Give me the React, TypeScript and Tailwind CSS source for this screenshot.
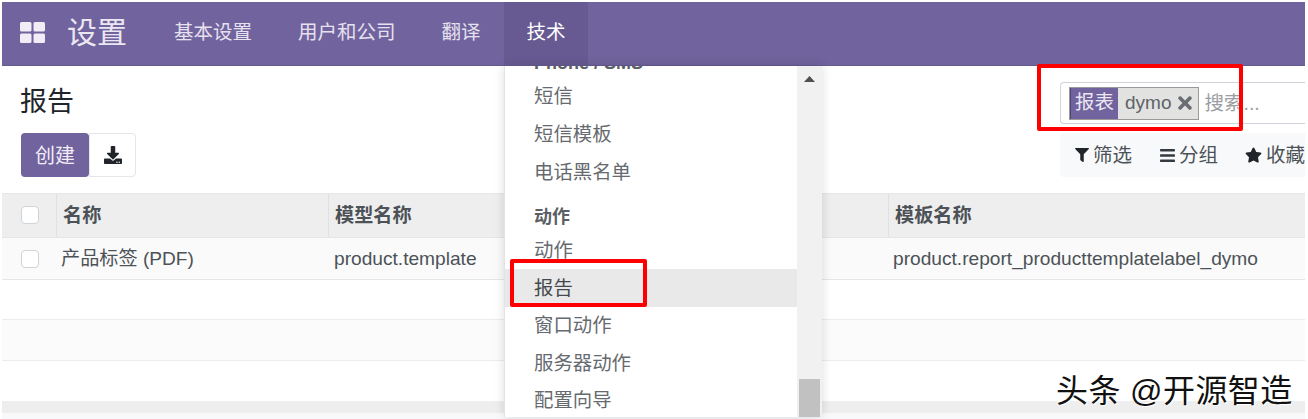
import React from 'react'
import { FaDownload, FaFilter, FaBars, FaStar, FaTimes } from 'react-icons/fa'

const appFont = "font-['Liberation_Sans','Noto_Sans_CJK_SC',sans-serif]"

const topItems = [
  { label: '短信', height: 'h-[38px]' },
  { label: '短信模板', height: 'h-[38px]' },
  { label: '电话黑名单', height: 'h-[37.5px]' },
]

const actionItems = ['动作', '报告', '窗口动作', '服务器动作', '配置向导']

const Checkbox = () => (
  <span className="block w-[18px] h-[18px] rounded-[4px] border border-[#ced4da] bg-white" />
)

const DropdownMenu = () => (
  <div className="absolute left-[504px] top-[66px] w-[318px] h-[351px] bg-white border-l border-[#e4e4e4] shadow-[0_0_10px_rgba(0,0,0,0.14)] flex overflow-hidden">
    <div className="flex-1 min-w-0 text-[19.4px] text-[#666a6e]">
      <div className="h-[12px] relative overflow-hidden">
        <span className="absolute left-[29px] top-[-13px] font-bold text-[18px] leading-[20px] text-[#5c6064] whitespace-nowrap">Phone / SMS</span>
      </div>
      {topItems.map(item => (
        <div key={item.label} className={`${item.height} flex items-center pl-[29px]`}>{item.label}</div>
      ))}
      <div className="h-[9.5px]" />
      <div className="h-[30.5px] pt-[2px] flex items-center pl-[29px] text-[18px] font-bold text-[#5c6064]">动作</div>
      {actionItems.map(label => (
        <div
          key={label}
          className={`h-[37.5px] pt-[1px] flex items-center pl-[29px] ${label === '报告' ? 'bg-[#e9e9e9] text-[#45494d]' : ''}`}
        >
          {label}
        </div>
      ))}
    </div>
    <div className="w-[25px] bg-[#f1f1f1] flex flex-col items-center justify-between shrink-0">
      <svg className="mt-[10px]" width="11" height="6" viewBox="0 0 11 6">
        <path d="M5.5 0 L11 6 L0 6 Z" fill="#505050" />
      </svg>
      <div className="w-[21px] h-[38px] bg-[#c1c1c1]" />
    </div>
  </div>
)

export default function App() {
  return (
    <div className={`${appFont} relative w-[1308px] h-[419px] overflow-hidden bg-white pt-[2px] pl-[2px] pr-[3px]`}>
      {/* navbar */}
      <nav className="h-[64px] bg-[#71639e] border-b border-[#655a90] flex items-center text-white">
        <svg className="ml-[18px] mr-[23px] mb-[2px]" width="25" height="21" viewBox="0 0 25 21" fill="#f1ecf6">
          <rect x="0" y="0" width="11.5" height="9.5" rx="1.5" />
          <rect x="13.5" y="0" width="11.5" height="9.5" rx="1.5" />
          <rect x="0" y="11.5" width="11.5" height="9.5" rx="1.5" />
          <rect x="13.5" y="11.5" width="11.5" height="9.5" rx="1.5" />
        </svg>
        <span className="text-[30px] text-[#ebe7f2] mr-[24px] mb-[2px] -ml-[1px]">设置</span>
        <div className="flex h-full text-[19.5px] text-[#e6e1ee]">
          <span className="px-[23px] pb-[2px] flex items-center">基本设置</span>
          <span className="px-[23px] pb-[2px] flex items-center">用户和公司</span>
          <span className="px-[23px] pb-[2px] flex items-center">翻译</span>
          <span className="pl-[23px] pr-[22px] pb-[2px] flex items-center bg-[#675a92] text-white">技术</span>
        </div>
      </nav>

      {/* control panel */}
      <div className="h-[127px] flex justify-between">
        <div className="pl-[19px]">
          <h1 className="text-[27px] leading-[36px] mt-[18px] -ml-[1px] font-normal text-[#212529]">报告</h1>
          <div className="flex mt-[13px]">
            <button className="w-[68px] h-[44px] pt-[2px] bg-[#71639e] rounded-[4px] text-[20px] text-[#f1edf6]">创建</button>
            <button className="w-[47px] h-[44px] border border-[#e6e6e6] rounded-r-[4px] bg-white flex items-center justify-center">
              <FaDownload className="w-[18px] h-[18px] text-[#212529]" />
            </button>
          </div>
        </div>
        <div className="w-[245px] shrink-0 ml-auto">
          <div className="mt-[16px] h-[42px] border border-[#ced4da] border-r-0 rounded-l-[4px] flex items-center pl-[8px]">
            <div className="h-[33px] flex items-stretch border border-[#9a9a9a] bg-[#e2e2e0]">
              <span className="w-[48px] bg-[#71639e] border-l border-[#4e4570] text-[#ebe7f2] text-[19.5px] flex items-center justify-center">报表</span>
              <span className="flex items-center text-[19px] text-[#5d6368] pl-[7px] pr-[6px] gap-[7px]">
                dymo
                <FaTimes className="w-[14px] h-[20px] text-[#6a6e72]" />
              </span>
            </div>
            <span className="text-[19.5px] text-[#9a9ea3] ml-[5px] pt-[2px]">搜索...</span>
          </div>
          <div className="mt-[9px] h-[44px] bg-[#f8f9fa] rounded-l-[4px] flex items-center pl-[15px] text-[19.5px] text-[#4c5257] whitespace-nowrap overflow-hidden">
            <FaFilter className="w-[14px] h-[14px] text-[#212529] mr-[4px] shrink-0" />
            <span className="pt-[2px]">筛选</span>
            <FaBars className="w-[15px] h-[17px] text-[#343a40] ml-[28px] mr-[4px] shrink-0" />
            <span className="pt-[2px]">分组</span>
            <FaStar className="w-[17px] h-[16px] text-[#212529] ml-[27px] mr-[4px] shrink-0" />
            <span className="pt-[2px]">收藏</span>
          </div>
        </div>
      </div>

      {/* list */}
      <div className="text-[19.15px] text-[#4c5257]">
        <div className="h-[45px] bg-[#eeeeee] border-t border-b border-[#e4e7ea] flex items-center font-bold">
          <div className="w-[55px] h-full flex items-center border-r border-[#e0e0e0] pl-[19px] pb-[2px]"><Checkbox /></div>
          <div className="w-[272px] h-full flex items-center pl-[6px] pt-[2px] border-r border-[#e0e0e0]">名称</div>
          <div className="w-[560px] h-full flex items-center pl-[6px] pt-[2px] border-r border-[#e0e0e0]">模型名称</div>
          <div className="flex-1 h-full flex items-center pl-[6px] pt-[2px]">模板名称</div>
        </div>
        <div className="h-[42px] bg-[#fafafa] border-b border-[#e6e6e6] flex items-center">
          <div className="w-[55px] pl-[19px]"><Checkbox /></div>
          <div className="w-[272px] pl-[4px] pt-[2px]">产品标签 (PDF)</div>
          <div className="w-[560px] pl-[5px] pt-[2px]">product.template</div>
          <div className="flex-1 pl-[4px] pt-[2px]">product.report_producttemplatelabel_dymo</div>
        </div>
        <div className="h-[40px] bg-white border-b border-[#ececec]" />
        <div className="h-[41px] bg-[#fbfbfb] border-b border-[#ececec]" />
        <div className="h-[40px] bg-white" />
        <div className="h-[12px] bg-[#eeeeee]" />
        <div className="h-[7px] bg-[#f8f9fa]" />
      </div>

      <DropdownMenu />

      {/* annotations */}
      <div className="absolute left-[1037px] top-[64px] w-[206px] h-[67px] border-[4px] border-[#fe0000] rounded-[2px]" />
      <div className="absolute left-[510px] top-[259px] w-[137px] h-[48px] border-[4px] border-[#fe0000] rounded-[2px]" />
      <div className="absolute left-[1056px] top-[369px] text-[32px] leading-[44px] tracking-[0.4px] text-[#111] [text-shadow:1px_1px_0_#fff,-1px_-1px_0_#fff] whitespace-nowrap">头条 @开源智造</div>
    </div>
  )
}
